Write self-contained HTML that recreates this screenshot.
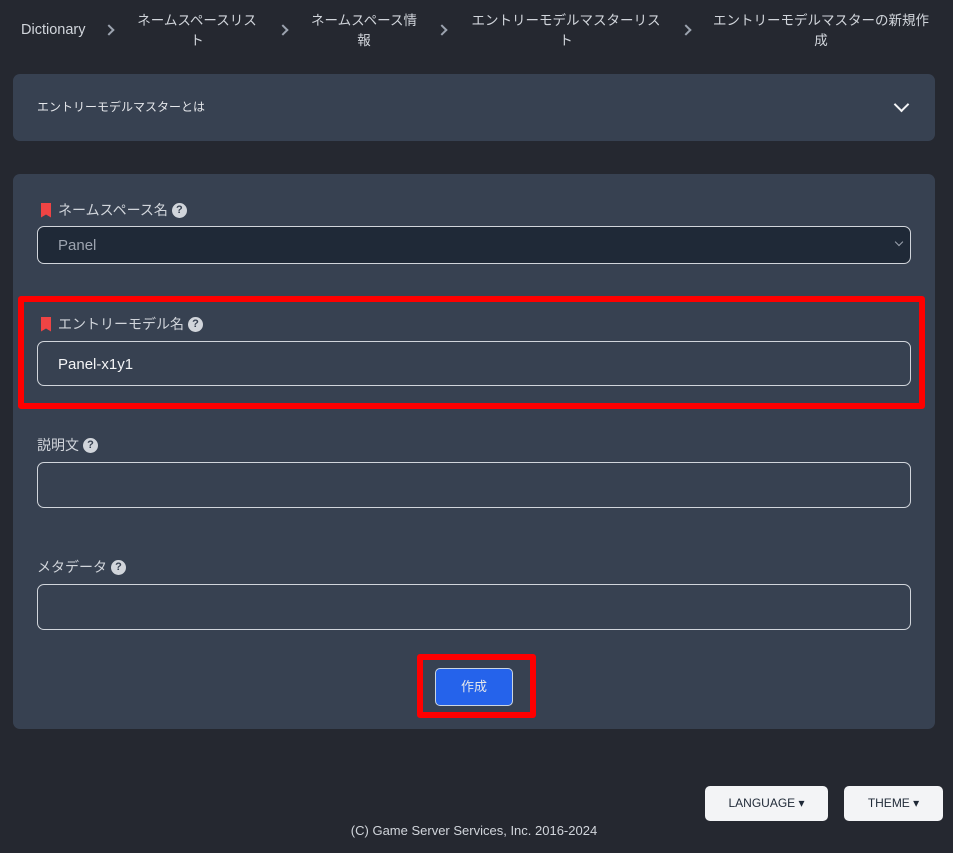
<!DOCTYPE html>
<html><head><meta charset="utf-8"><style>
*{box-sizing:border-box;margin:0;padding:0}
body{width:953px;height:853px;background:#252830;font-family:"Liberation Sans","Noto Sans CJK JP",sans-serif;color:#e5e7eb;position:relative;overflow:hidden}
.a{position:absolute}
.bc{font-size:13.5px;color:#d1d5db;text-align:center;line-height:20px}
.chev{position:absolute;width:8px;height:8px;border-right:2px solid #9ca3af;border-top:2px solid #9ca3af;transform:rotate(45deg)}
.panel{background:#374151;border-radius:7px}
.lbl{font-size:14px;color:#d1d5db;display:flex;align-items:center;gap:4px}
.bm{width:10px;height:15px;background:#ef4444;clip-path:polygon(0 0,100% 0,100% 100%,50% 80%,0 100%);margin-right:3px}
.q{width:15px;height:15px;border-radius:50%;background:#d1d5db;color:#374151;font-size:11px;font-weight:bold;text-align:center;line-height:15px}
.inp{border:1px solid #d1d5db;border-radius:7px;left:37px;width:874px}
.btn{background:#f3f4f6;border-radius:5px;color:#1f2937;font-size:12px;text-align:center;line-height:34px}
</style></head><body>
<div class="a bc" style="left:21px;top:20px;font-size:14.5px">Dictionary</div>
<div class="chev" style="left:105px;top:26px"></div>
<div class="a bc" style="left:133px;top:11px;width:128px">ネームスペースリスト</div>
<div class="chev" style="left:279px;top:26px"></div>
<div class="a bc" style="left:308px;top:11px;width:112px">ネームスペース情報</div>
<div class="chev" style="left:438px;top:26px"></div>
<div class="a bc" style="left:466px;top:11px;width:200px">エントリーモデルマスターリスト</div>
<div class="chev" style="left:682px;top:26px"></div>
<div class="a bc" style="left:708px;top:11px;width:226px">エントリーモデルマスターの新規作成</div>

<div class="a panel" style="left:13px;top:74px;width:922px;height:67px"></div>
<div class="a" style="left:37px;top:98px;font-size:12px;color:#e5e7eb">エントリーモデルマスターとは</div>
<div class="a" style="left:896px;top:99px;width:11px;height:11px;border-right:2px solid #f3f4f6;border-bottom:2px solid #f3f4f6;transform:rotate(45deg)"></div>

<div class="a panel" style="left:13px;top:174px;width:922px;height:555px"></div>
<div class="a lbl" style="left:41px;top:200px"><div class="bm"></div>ネームスペース名<div class="q">?</div></div>
<div class="a inp" style="top:226px;height:38px;background:#1f2937"><span class="a" style="left:20px;top:10px;font-size:15px;color:#9ca3af">Panel</span><span class="a" style="right:8px;top:12px;width:6px;height:6px;border-right:1.5px solid #9ca3af;border-bottom:1.5px solid #9ca3af;transform:rotate(45deg)"></span></div>

<div class="a" style="left:18px;top:296px;width:907px;height:113px;border:6px solid #ff0000;border-radius:3px"></div>
<div class="a lbl" style="left:41px;top:314px"><div class="bm"></div>エントリーモデル名<div class="q">?</div></div>
<div class="a inp" style="top:341px;height:45px"><span class="a" style="left:20px;top:14px;font-size:15px;color:#f3f4f6">Panel-x1y1</span></div>

<div class="a lbl" style="left:37px;top:435px">説明文<div class="q">?</div></div>
<div class="a inp" style="top:462px;height:46px"></div>
<div class="a lbl" style="left:37px;top:557px">メタデータ<div class="q">?</div></div>
<div class="a inp" style="top:584px;height:46px"></div>

<div class="a" style="left:417px;top:654px;width:119px;height:64px;border:6px solid #ff0000;border-radius:3px"></div>
<div class="a" style="left:435px;top:668px;width:78px;height:38px;background:#2563eb;border:1px solid #cbd5e1;border-radius:5px;color:#e5e7eb;font-size:13px;text-align:center;line-height:36px">作成</div>

<div class="a btn" style="left:705px;top:786px;width:123px;height:35px">LANGUAGE ▾</div>
<div class="a btn" style="left:844px;top:786px;width:99px;height:35px">THEME ▾</div>
<div class="a" style="left:0;width:948px;top:823px;text-align:center;font-size:13px;color:#d1d5db">(C) Game Server Services, Inc. 2016-2024</div>
</body></html>
